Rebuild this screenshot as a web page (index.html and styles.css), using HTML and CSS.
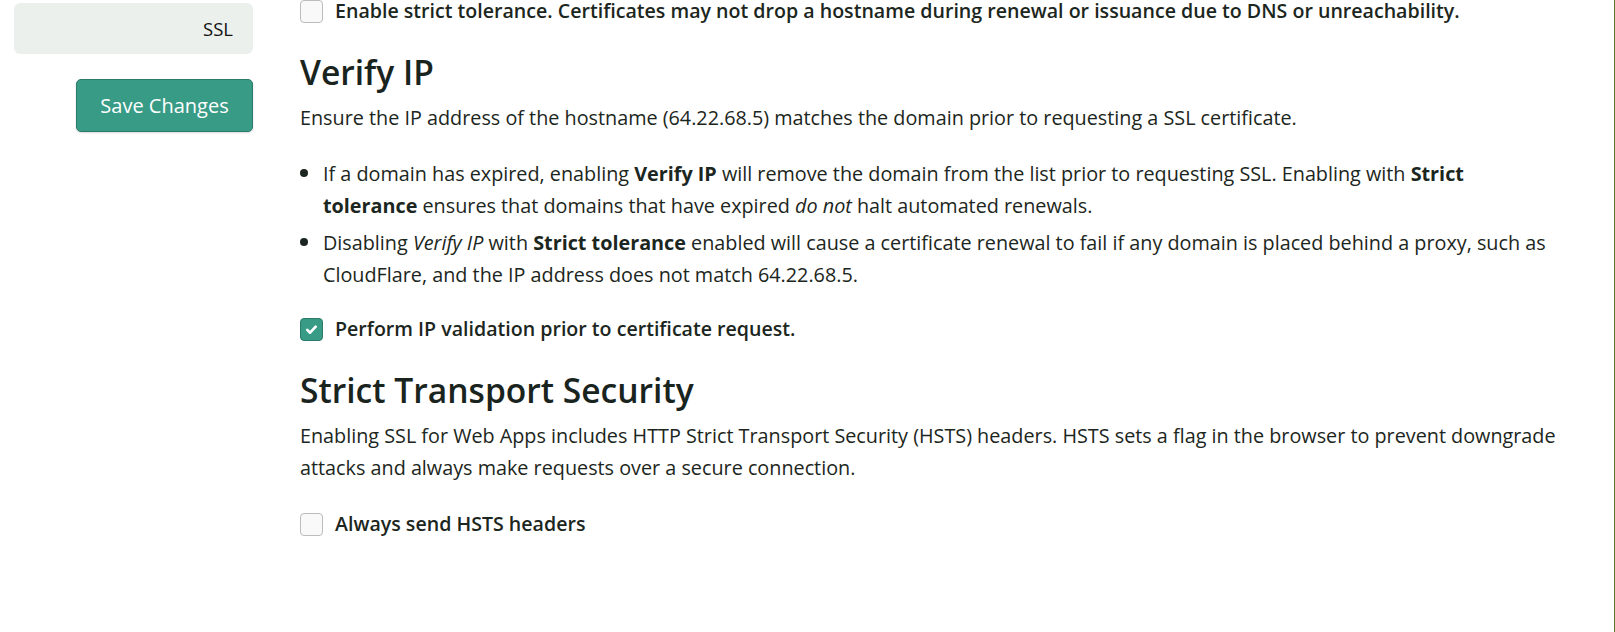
FILE: index.html
```html
<!DOCTYPE html>
<html lang="en">
<head>
    <meta charset="UTF-8">
    <title>SSL Settings</title>
    <link rel="stylesheet" href="styles.css">
</head>
<body>

    <div class="page">
        <aside class="sidebar">
            <div class="tab">SSL</div>
            <button class="save">Save Changes</button>
        </aside>

        <main class="content">
            <label class="option first">
                <span class="box"></span>
                Enable strict tolerance. Certificates may not drop a hostname during renewal or issuance due to DNS or unreachability.
            </label>

            <h2>Verify IP</h2>
            <p>Ensure the IP address of the hostname (64.22.68.5) matches the domain prior to requesting a SSL certificate.</p>
            <ul>
                <li>If a domain has expired, enabling <b>Verify IP</b> will remove the domain from the list prior to requesting SSL. Enabling with <b>Strict tolerance</b> ensures that domains that have expired <i>do not</i> halt automated renewals.</li>
                <li>Disabling <i>Verify IP</i> with <b>Strict tolerance</b> enabled will cause a certificate renewal to fail if any domain is placed behind a proxy, such as CloudFlare, and the IP address does not match 64.22.68.5.</li>
            </ul>
            <label class="option">
                <span class="box checked">
                    <svg viewBox="0 0 24 24" width="17" height="17"><path d="M6 12.5l4 4 8-8.5" fill="none" stroke="#fff" stroke-width="3.8" stroke-linecap="round" stroke-linejoin="round"/></svg>
                </span>
                Perform IP validation prior to certificate request.
            </label>

            <h2>Strict Transport Security</h2>
            <p>Enabling SSL for Web Apps includes HTTP Strict Transport Security (HSTS) headers. HSTS sets a flag in the browser to prevent downgrade attacks and always make requests over a secure connection.</p>
            <label class="option">
                <span class="box"></span>
                Always send HSTS headers
            </label>
        </main>
    </div>

</body>
</html>
```

FILE: styles.css
```css
html, body { margin: 0; height: 100%; background: #fff; }
body { font-family: "Open Sans", "Noto Sans", sans-serif; color: #1c2620; font-size: 19.8px; overflow: hidden; }
.page { display: grid; grid-template-columns: 239px 1fr; column-gap: 47px; padding: 0 57px 0 14px; height: 100%; border-right: 1px solid #5b7a2c; box-sizing: border-box; }

.sidebar { display: flex; flex-direction: column; align-items: flex-end; padding-top: 3px; }
.tab { width: 100%; height: 51px; line-height: 51px; box-sizing: border-box; padding-right: 20px; text-align: right; background: #ecf0ed; border-radius: 6px; font-size: 18.5px; color: #111; }
.save { margin-top: 25px; width: 177px; height: 53px; background: #389b86; color: #fff; border: 1px solid #2c7b69; border-radius: 5px; font-family: inherit; font-size: 20px; cursor: pointer; box-shadow: 0 1px 2px rgba(0,0,0,0.15); }
.save:hover { background: #318a77; }

.content { margin-top: -5px; }
.option { display: flex; align-items: center; gap: 12px; font-weight: 600; font-size: 19.6px; line-height: 32px; }
.box { flex: none; width: 21px; height: 21px; border: 1px solid #b9bdbb; border-radius: 4px; background: #f8f9f8; display: flex; align-items: center; justify-content: center; }
.box.checked { background: #389b86; border-color: #2c7b69; }

h2 { font-size: 33.6px; font-weight: 600; margin: 23px 0 8px; line-height: 44px; color: #1a241e; }
p { margin: 0 0 22px; line-height: 32px; }
p:last-of-type { margin-bottom: 24px; }
ul { margin: 0 0 22px; padding-left: 23px; line-height: 32px; }
li { margin-bottom: 3px; }
li:last-child { margin-bottom: 0; }
li::marker { font-size: 23px; }
b { font-weight: 700; }
```
